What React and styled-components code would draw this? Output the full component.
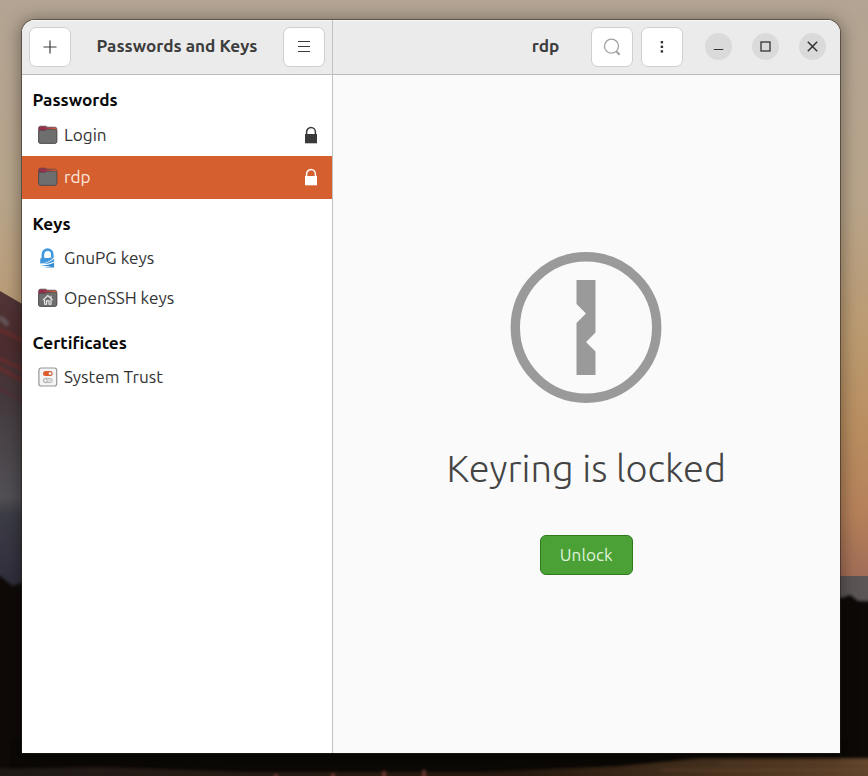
import React from "react";
import styled, { createGlobalStyle } from "styled-components";

const GlobalStyle = createGlobalStyle`
  * { box-sizing: border-box; }
  body {
    margin: 0;
    overflow: hidden;
    color: #3d3d3d;
    font: 17.2px/20px Ubuntu, "Noto Sans", sans-serif;
  }
  button { font: inherit; color: inherit; padding: 0; }
  svg { display: block; flex: none; }
`;

const Desktop = styled.div`
  position: relative;
  isolation: isolate;
  width: 868px;
  height: 776px;
  overflow: hidden;
  padding: 20px 28px 23px 22px;
`;

const Wallpaper = styled.svg`
  position: absolute;
  inset: 0;
  z-index: -1;
`;

const Window = styled.main`
  display: flex;
  height: 733px;
  width: 817.5px;
  border-radius: 13px 13px 0 0;
  overflow: hidden;
  box-shadow: 0 0 0 1px rgba(40, 32, 25, 0.5), 0 2px 16px 3px rgba(0, 0, 0, 0.34);
`;

const Sidebar = styled.aside`
  display: flex;
  flex-direction: column;
  width: 311px;
  border-right: 1px solid #c2c2c2;
  background: #fff;
`;

const Content = styled.section`
  display: flex;
  flex-direction: column;
  flex: 1;
  background: #fafafa;
`;

const HeaderBar = styled.header`
  display: flex;
  align-items: center;
  flex: none;
  height: 55px;
  padding: ${(p) => p.$pad};
  border-bottom: 1px solid #bcbcbc;
  background: #ebebeb;
  box-shadow: inset 0 1px #fafafa;
`;

const Title = styled.h1`
  flex: 1;
  margin: 0;
  padding: 0 0 2px ${(p) => p.$indent || 0}px;
  font-size: 17.2px;
  font-weight: 700;
  line-height: 20px;
  text-align: center;
  white-space: nowrap;
`;

const ToolButton = styled.button`
  display: grid;
  place-items: center;
  flex: none;
  width: 42px;
  height: 40px;
  margin-left: ${(p) => p.$gap || 0}px;
  border: 1px solid #cfcfcf;
  border-radius: 7px;
  background: #fff;
`;

const WindowControls = styled.div`
  display: flex;
  gap: 20px;
  margin-left: 22px;
`;

const ControlButton = styled.button`
  display: grid;
  place-items: center;
  width: 27px;
  height: 27px;
  border: 0;
  border-radius: 50%;
  background: #dadada;
`;

const Group = styled.section`
  padding-top: 11px;
`;

const GroupTitle = styled.h2`
  height: 28px;
  margin: 0;
  padding-left: 10.5px;
  color: #0a0a0a;
  font-size: 17.2px;
  font-weight: 700;
  line-height: 28px;
`;

const Row = styled.div`
  display: flex;
  align-items: center;
  height: ${(p) => p.$height}px;
  padding: 0 14px ${(p) => (p.$selected ? 1 : 0)}px 16px;
  color: ${(p) => (p.$selected ? "#fbe6dc" : "#333")};
  background: ${(p) => (p.$selected ? "#d65f2f" : "transparent")};
`;

const RowLabel = styled.span`
  flex: 1;
  padding-left: 6px;
`;

const LockedPane = styled.div`
  display: flex;
  flex-direction: column;
  align-items: center;
  padding-top: 176px;
`;

const Message = styled.h2`
  margin: 41px 0 42px;
  color: #444;
  font-size: 38px;
  font-weight: 300;
  line-height: 49px;
  white-space: nowrap;
`;

const UnlockButton = styled.button`
  width: 93px;
  height: 40px;
  padding-bottom: 1px;
  border: 1px solid #2d7a1d;
  border-radius: 6px;
  color: #dff3da;
  background: #4ba036;
`;

function Backdrop() {
  return (
    <Wallpaper width="868" height="776" viewBox="0 0 868 776" aria-hidden="true">
      <defs>
        <linearGradient id="sky" x1="0" y1="0" x2="0" y2="580" gradientUnits="userSpaceOnUse">
          <stop offset="0" stopColor="#b3a493" />
          <stop offset=".35" stopColor="#b8a48a" />
          <stop offset=".58" stopColor="#bb9a70" />
          <stop offset=".74" stopColor="#b98e60" />
          <stop offset=".88" stopColor="#b5815a" />
          <stop offset="1" stopColor="#a16c56" />
        </linearGradient>
        <linearGradient id="ridge" x1="0" y1="292" x2="0" y2="585" gradientUnits="userSpaceOnUse">
          <stop offset="0" stopColor="#513638" />
          <stop offset=".18" stopColor="#4d2c2d" />
          <stop offset=".36" stopColor="#443a3e" />
          <stop offset=".7" stopColor="#525055" />
          <stop offset=".76" stopColor="#3c3c46" />
          <stop offset="1" stopColor="#302e3b" />
        </linearGradient>
        <linearGradient id="floor" x1="0" y1="0" x2="868" y2="0" gradientUnits="userSpaceOnUse">
          <stop offset="0" stopColor="#1f1915" />
          <stop offset=".2" stopColor="#261c16" />
          <stop offset=".6" stopColor="#27190f" />
          <stop offset=".85" stopColor="#4c3520" />
          <stop offset="1" stopColor="#5f432a" />
        </linearGradient>
        <filter id="soft" filterUnits="userSpaceOnUse" x="-30" y="250" width="930" height="560" colorInterpolationFilters="sRGB">
          <feGaussianBlur stdDeviation="1.4" />
        </filter>
      </defs>
      <rect width="868" height="776" fill="url(#sky)" />
      <path d="M0 291 L24 305 V600 H0Z" fill="url(#ridge)" />
      <g filter="url(#soft)" fill="none">
        <path d="M0 317 L8 325" stroke="#66575a" strokeWidth="5" />
        <path d="M-4 328 L24 341 M-4 357 L24 370 M-4 366 L24 382" stroke="#6e2c2c" strokeWidth="3" />
        <path d="M-4 388 L24 400" stroke="#523035" strokeWidth="3" />
      </g>
      <rect x="820" y="576" width="48" height="28" fill="#5c5556" />
      <path d="M-20 576 H0 L6 581 L13 586 L30 580 V790 H-20Z" fill="#0f0a07" filter="url(#soft)" />
      <path d="M820 589 L842 598 L850 595 L858 601 L890 602 V790 H820Z" fill="#0d0907" filter="url(#soft)" />
      <rect x="10" y="740" width="840" height="36" fill="#0b0805" />
      <g filter="url(#soft)">
        <path d="M-20 769 L100 767 L250 772 H480 L620 766 L700 758 H890 V790 H-20Z" fill="url(#floor)" />
        <path d="M660 770 H880 M720 763 H880" stroke="#735033" strokeWidth="1.5" opacity=".5" />
        <path d="M276 782 V774 M333 782 V773 M384 782 V771 M424 782 V770" stroke="#67352a" strokeWidth="4" />
      </g>
    </Wallpaper>
  );
}

function FolderIcon({ home }) {
  const id = home ? "folder-home-tab" : "folder-tab";
  return (
    <svg width="20" height="20" viewBox="0 0 20 20">
      <defs>
        <linearGradient id={id}>
          <stop offset=".3" stopColor="#93304c" />
          <stop offset=".9" stopColor="#dc6038" />
        </linearGradient>
      </defs>
      <path d="M2.5 1.2h5.3L9 2.2h7.8a2 2 0 0 1 2 2v12.1a2 2 0 0 1-2 2H2.6a2 2 0 0 1-2-2V3.2a2 2 0 0 1 1.9-2Z" fill={`url(#${id})`} stroke="#5a4549" strokeWidth=".8" />
      <path d="M.7 7.2c0-1.2.6-1.7 1.7-1.7h5.1l1.4-1.1h8c1.2 0 1.8.5 1.8 1.6v10.7c0 1-.6 1.6-1.6 1.6H2.3c-1 0-1.6-.6-1.6-1.6Z" fill="#6e6e6e" stroke="#4f4f4f" strokeWidth=".8" />
      {home && <path d="m4.9 12.2 4.9-4.6 4.9 4.6M6.6 11.8v4.5h2v-3.4H11v3.4h2v-4.5M13 9.7V7.8" fill="none" stroke="#eee" strokeWidth="1.1" />}
    </svg>
  );
}

function GnuPgIcon() {
  return (
    <svg width="20" height="20" viewBox="0 0 20 20">
      <path d="M4.9 11V6.3a4.7 4.7 0 0 1 9.4 0V9" fill="none" stroke="#4298dc" strokeWidth="2.6" />
      <path d="M2.2 15.6V11l1.6-1.4c3.8.9 8 .5 11.8-1.2v1.3C11.8 13.4 7.2 15.4 2.2 15.6Z" fill="#4298dc" />
      <path d="M5.4 15.7c4-.6 7.2-2.2 10.7-4.9v2.6c-3.5 1.9-6.8 2.6-10.7 2.3Z" fill="#4298dc" />
      <path d="M3.2 17c4.4.5 8.8-.2 12.9-2.5v4.9H5.2c3-.1 5.5-.5 8-1.5-3.4.5-6.8.3-10-.9Z" fill="#348bd3" />
    </svg>
  );
}

function TrustIcon() {
  return (
    <svg width="20" height="20" viewBox="0 0 20 20">
      <rect x=".9" y="1" width="17.8" height="18" rx="2.2" fill="#f5f5f5" stroke="#969696" strokeWidth="1.2" />
      <rect x="5" y="4" width="9.6" height="5" rx="2.5" fill="#e05b2b" />
      <circle cx="12.1" cy="6.5" r="1.7" fill="#fff" stroke="#b74b27" strokeWidth=".6" />
      <rect x="5.3" y="11.4" width="9" height="4.2" rx="2.1" fill="#ddd" stroke="#aaa" strokeWidth=".8" />
      <circle cx="7.4" cy="13.5" r="1.8" fill="#fafafa" stroke="#999" strokeWidth=".7" />
    </svg>
  );
}

function LockIcon() {
  return (
    <svg width="14" height="18" viewBox="0 0 14 18">
      <path d="M2.6 8.5V6a4.4 4.4 0 0 1 8.8 0v2.5" fill="none" stroke="currentColor" strokeWidth="1.5" />
      <rect x="1" y="8" width="12" height="9.3" fill="currentColor" />
    </svg>
  );
}

const LockColor = styled.span`
  color: ${(p) => (p.$light ? "#fff" : "#3a3a3a")};
`;

function Item({ icon, label, locked, selected, height = 40 }) {
  return (
    <Row $selected={selected} $height={height}>
      {icon}
      <RowLabel>{label}</RowLabel>
      {locked && <LockColor $light={selected}><LockIcon /></LockColor>}
    </Row>
  );
}

function KeyringEmblem() {
  return (
    <svg width="152" height="152" viewBox="0 0 152 152">
      <circle cx="76" cy="76.5" r="70.7" fill="none" stroke="#9a9a9a" strokeWidth="9.4" />
      <path d="M66.5 29h19v52.5L76 91l9.5 9.5V124h-19V72l9.5-9.5-9.5-9.5Z" fill="#9a9a9a" />
    </svg>
  );
}

export default function App() {
  return (
    <>
      <GlobalStyle />
      <Desktop>
        <Backdrop />
        <Window>
          <Sidebar>
            <HeaderBar $pad="0 7px 1px 7px">
              <ToolButton aria-label="Add">
                <svg width="14" height="14" viewBox="0 0 14 14"><path d="M7 .5v13M.5 7h13" stroke="#3d3d3d" strokeWidth="1.2" /></svg>
              </ToolButton>
              <Title>Passwords and Keys</Title>
              <ToolButton aria-label="Menu">
                <svg width="14" height="14" viewBox="0 0 14 14"><path d="M1 1.5h12M1 6.5h12M1 11.5h12" stroke="#3d3d3d" strokeWidth="1.2" /></svg>
              </ToolButton>
            </HeaderBar>
            <Group>
              <GroupTitle>Passwords</GroupTitle>
              <Item icon={<FolderIcon />} label="Login" locked height={42} />
              <Item icon={<FolderIcon />} label="rdp" locked selected height={43} />
            </Group>
            <Group>
              <GroupTitle>Keys</GroupTitle>
              <Item icon={<GnuPgIcon />} label="GnuPG keys" />
              <Item icon={<FolderIcon home />} label="OpenSSH keys" />
            </Group>
            <Group>
              <GroupTitle>Certificates</GroupTitle>
              <Item icon={<TrustIcon />} label="System Trust" />
            </Group>
          </Sidebar>
          <Content>
            <HeaderBar $pad="0 13.5px 1px 0">
              <Title $indent={167}>rdp</Title>
              <ToolButton aria-label="Search">
                <svg width="18" height="18" viewBox="0 0 18 18" fill="none" stroke="#a0a0a0" strokeWidth="1.3"><circle cx="8.5" cy="8.2" r="7" /><path d="m13.2 13.2 3.5 3.5" strokeWidth="2" /></svg>
              </ToolButton>
              <ToolButton aria-label="More" $gap={8}>
                <svg width="4" height="14" viewBox="0 0 4 14" fill="#333"><rect x=".7" y="1" width="2.4" height="2.4" /><rect x=".7" y="5.6" width="2.4" height="2.4" /><rect x=".7" y="10.2" width="2.4" height="2.4" /></svg>
              </ToolButton>
              <WindowControls>
                <ControlButton aria-label="Minimize">
                  <svg width="11" height="11" viewBox="0 0 11 11"><path d="M.8 8.5h9.4" stroke="#333" strokeWidth="1.2" /></svg>
                </ControlButton>
                <ControlButton aria-label="Maximize">
                  <svg width="11" height="11" viewBox="0 0 11 11"><rect x="1" y="1" width="9" height="9" fill="none" stroke="#333" strokeWidth="1.3" /></svg>
                </ControlButton>
                <ControlButton aria-label="Close">
                  <svg width="11" height="11" viewBox="0 0 11 11"><path d="m.8.8 9.4 9.4m0-9.4L.8 10.2" stroke="#333" strokeWidth="1.5" /></svg>
                </ControlButton>
              </WindowControls>
            </HeaderBar>
            <LockedPane>
              <KeyringEmblem />
              <Message>Keyring is locked</Message>
              <UnlockButton>Unlock</UnlockButton>
            </LockedPane>
          </Content>
        </Window>
      </Desktop>
    </>
  );
}
